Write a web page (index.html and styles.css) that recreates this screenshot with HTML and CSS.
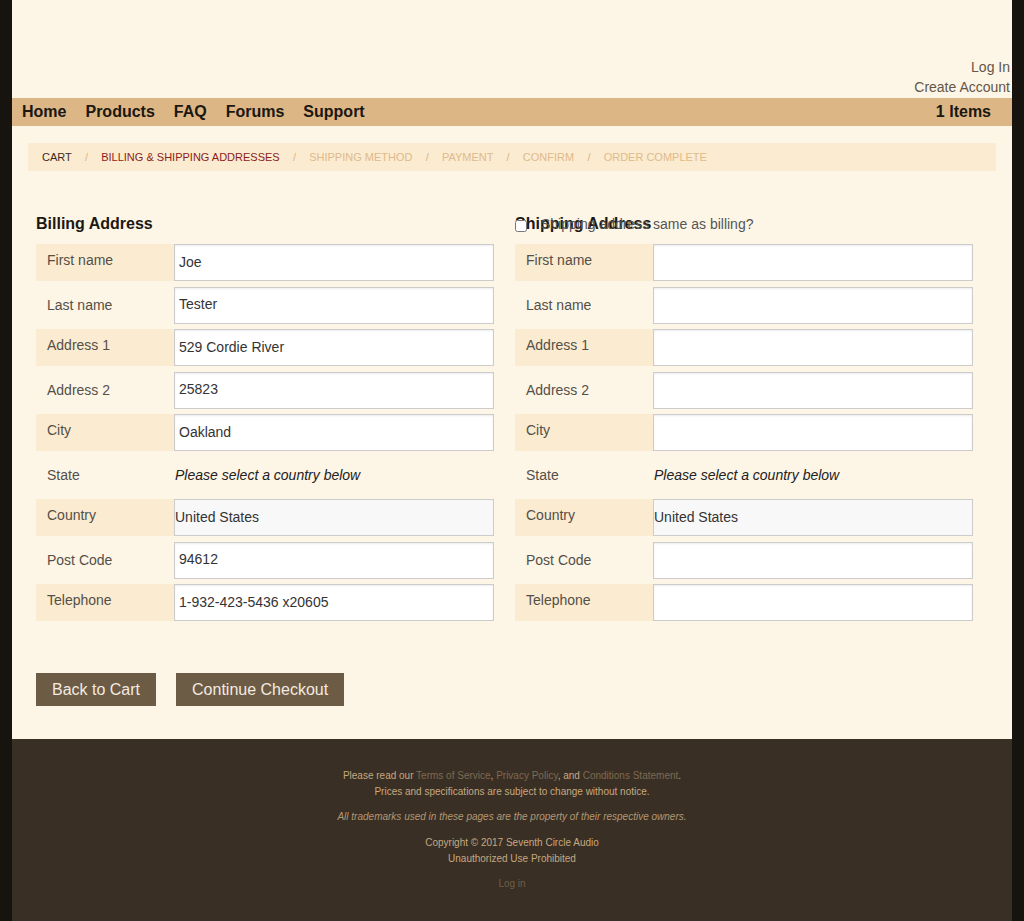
FILE: index.html
```html
<!DOCTYPE html>
<html>
<head>
<meta charset="utf-8">
<title>Checkout - Addresses</title>
<link rel="stylesheet" href="styles.css">
</head>
<body>
<div class="page">
  <header class="top">
    <div class="account">
      <a href="#">Log In</a>
      <a href="#">Create Account</a>
    </div>
  </header>
  <nav class="nav">
    <div class="nav-links">
      <a href="#">Home</a>
      <a href="#">Products</a>
      <a href="#">FAQ</a>
      <a href="#">Forums</a>
      <a href="#">Support</a>
    </div>
    <a class="cart" href="#">1 Items</a>
  </nav>
  <div class="crumbs">
    <span class="crumb done">CART</span><span class="sep">/</span><span class="crumb current">BILLING &amp; SHIPPING ADDRESSES</span><span class="sep">/</span><span class="crumb">SHIPPING METHOD</span><span class="sep">/</span><span class="crumb">PAYMENT</span><span class="sep">/</span><span class="crumb">CONFIRM</span><span class="sep">/</span><span class="crumb">ORDER COMPLETE</span>
  </div>

  <div class="columns">
    <section class="addr">
      <h3>Billing Address</h3>
      <div class="form">
        <div class="lbl alt">First name</div><div class="fld alt-f"><input type="text" value="Joe"></div>
        <div class="lbl">Last name</div><div class="fld"><input type="text" value="Tester"></div>
        <div class="lbl alt">Address 1</div><div class="fld alt-f"><input type="text" value="529 Cordie River"></div>
        <div class="lbl">Address 2</div><div class="fld"><input type="text" value="25823"></div>
        <div class="lbl alt">City</div><div class="fld alt-f"><input type="text" value="Oakland"></div>
        <div class="lbl">State</div><div class="fld"><em class="note">Please select a country below</em></div>
        <div class="lbl alt">Country</div><div class="fld alt-f"><div class="select">United States</div></div>
        <div class="lbl">Post Code</div><div class="fld"><input type="text" value="94612"></div>
        <div class="lbl alt">Telephone</div><div class="fld alt-f"><input type="text" value="1-932-423-5436 x20605"></div>
      </div>
    </section>
    <section class="addr ship">
      <label class="same"><input type="checkbox"> Shipping address same as billing?</label>
      <h3>Shipping Address</h3>
      <div class="form">
        <div class="lbl alt">First name</div><div class="fld alt-f"><input type="text" value=""></div>
        <div class="lbl">Last name</div><div class="fld"><input type="text" value=""></div>
        <div class="lbl alt">Address 1</div><div class="fld alt-f"><input type="text" value=""></div>
        <div class="lbl">Address 2</div><div class="fld"><input type="text" value=""></div>
        <div class="lbl alt">City</div><div class="fld alt-f"><input type="text" value=""></div>
        <div class="lbl">State</div><div class="fld"><em class="note">Please select a country below</em></div>
        <div class="lbl alt">Country</div><div class="fld alt-f"><div class="select">United States</div></div>
        <div class="lbl">Post Code</div><div class="fld"><input type="text" value=""></div>
        <div class="lbl alt">Telephone</div><div class="fld alt-f"><input type="text" value=""></div>
      </div>
    </section>
  </div>

  <div class="actions">
    <button class="btn">Back to Cart</button>
    <button class="btn">Continue Checkout</button>
  </div>

  <footer class="foot">
    <p>Please read our <a href="#">Terms of Service</a>, <a href="#">Privacy Policy</a>, and <a href="#">Conditions Statement</a>.<br>Prices and specifications are subject to change without notice.</p>
    <p class="tm">All trademarks used in these pages are the property of their respective owners.</p>
    <p>Copyright © 2017 Seventh Circle Audio<br>Unauthorized Use Prohibited</p>
    <p><a class="login" href="#">Log in</a></p>
  </footer>
</div>
</body>
</html>
```

FILE: styles.css
```css
html, body {
  margin: 0;
  padding: 0;
  background: #17130f;
  font-family: "Liberation Sans", Arial, sans-serif;
}
.page {
  width: 1000px;
  margin: 0 auto;
  background: #fdf5e6;
  min-height: 921px;
  display: flex;
  flex-direction: column;
}
a { text-decoration: none; }

.top {
  height: 98px;
  display: flex;
  justify-content: flex-end;
  align-items: flex-end;
}
.account {
  display: flex;
  flex-direction: column;
  align-items: flex-end;
  padding: 0 2px 1px 0;
  font-size: 14px;
  line-height: 20px;
}
.account a { color: #625749; }

.nav {
  height: 28px;
  background: #dcb685;
  display: flex;
  align-items: center;
  justify-content: space-between;
  padding: 0 21px 0 10px;
}
.nav-links { display: flex; gap: 19px; }
.nav a {
  color: #1b1711;
  font-weight: bold;
  font-size: 16px;
  line-height: 28px;
}

.crumbs {
  margin: 17px 16px 0;
  height: 28px;
  background: #fbebd0;
  display: flex;
  align-items: center;
  padding-left: 14px;
  font-size: 11px;
}
.crumb { color: #dfba8b; }
.crumb.done { color: #3c2a1c; }
.crumb.current { color: #8b1d19; }
.sep { color: #d8b68a; padding: 0 13.2px; }

.columns {
  display: flex;
  gap: 21px;
  padding: 43px 0 0 24px;
}
.addr { width: 458px; position: relative; }
.addr h3 {
  margin: 0 0 11px;
  font-size: 16px;
  line-height: 19px;
  color: #1c1813;
}
.same {
  position: absolute;
  top: 1px;
  left: 0;
  display: flex;
  align-items: center;
  font-size: 14px;
  line-height: 19px;
  color: #555;
  gap: 14px;
}
.same input {
  margin: 0;
  width: 12px;
  height: 12px;
  position: relative;
  top: 1px;
}

.form {
  display: grid;
  grid-template-columns: 138px 320px;
  grid-auto-rows: 37px;
  row-gap: 5.5px;
}
.lbl {
  font-size: 14px;
  line-height: 16px;
  color: #545048;
  padding: 10px 0 0 11px;
}
.lbl.alt {
  background: #fbebd0;
  padding-top: 8px;
}
.fld { display: flex; align-items: center; }
.fld input {
  box-sizing: border-box;
  width: 320px;
  height: 37px;
  margin: 0;
  border: 1px solid #cccccc;
  background: #fff;
  padding: 0 4px 2px;
  font-family: "Liberation Sans", Arial, sans-serif;
  font-size: 14px;
  color: #333;
  box-shadow: inset 0 1px 2px rgba(0,0,0,0.08);
}
.select {
  box-sizing: border-box;
  width: 320px;
  height: 37px;
  border: 1px solid #cccccc;
  background: #f8f8f8;
  font-size: 14px;
  color: #333;
  display: flex;
  align-items: center;
  padding-bottom: 1px;
}
.note {
  font-size: 14px;
  color: #222;
  padding-left: 1px;
}

.actions {
  display: flex;
  gap: 20px;
  padding: 52px 0 33px 24px;
}
.btn {
  background: #6c5b45;
  color: #f3ebe0;
  border: 0;
  border-radius: 0;
  font-family: "Liberation Sans", Arial, sans-serif;
  font-size: 16px;
  line-height: 19px;
  padding: 7px 16px;
  height: 33px;
}

.foot {
  flex: 1;
  background: #3a2f24;
  padding: 29px 0 10px;
  text-align: center;
  font-size: 10px;
  line-height: 16px;
  color: #c4a983;
}
.foot p { margin: 0 0 9px; }
.foot a { color: #7c6a52; }
.foot .tm { font-style: italic; color: #b39874; margin-bottom: 10px; }
.foot a.login { color: #6f5e48; }
```
